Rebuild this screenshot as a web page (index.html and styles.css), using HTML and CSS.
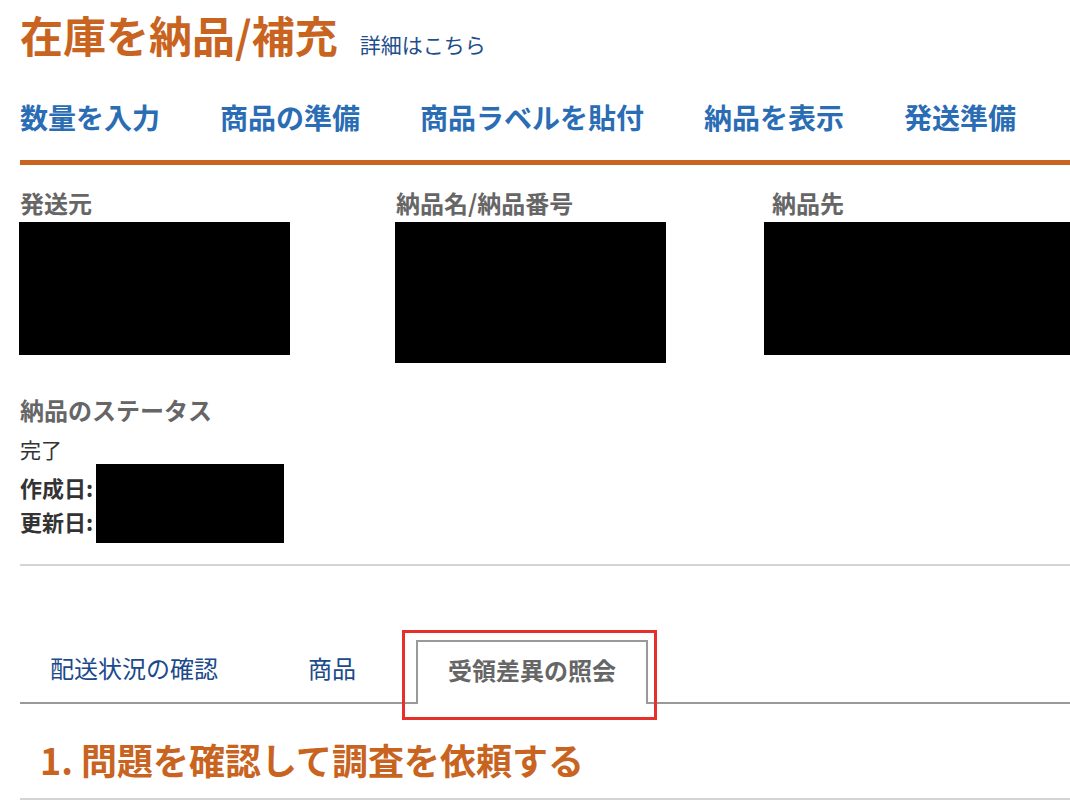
FILE: index.html
```html
<!DOCTYPE html>
<html lang="ja">
<head>
    <meta charset="UTF-8">
    <meta name="viewport" content="width=device-width, initial-scale=1.0">
    <title>在庫を納品/補充</title>
    <link rel="stylesheet" href="styles.css">
</head>
<body>
<div class="page">
    <!-- ヘッダー -->
    <div class="page-header">
        <h1 class="page-title">在庫を納品/補充</h1>
        <a class="help-link" href="#">詳細はこちら</a>
    </div>

    <!-- ステップ -->
    <nav class="steps">
        <a href="#">数量を入力</a>
        <a href="#">商品の準備</a>
        <a href="#">商品ラベルを貼付</a>
        <a href="#">納品を表示</a>
        <a href="#">発送準備</a>
    </nav>

    <!-- 納品情報 -->
    <div class="shipment-info">
        <div class="info-col">
            <h3 class="info-label">発送元</h3>
            <div class="redact redact-from"></div>
        </div>
        <div class="info-col">
            <h3 class="info-label">納品名/納品番号</h3>
            <div class="redact redact-name"></div>
        </div>
        <div class="info-col">
            <h3 class="info-label">納品先</h3>
            <div class="redact redact-to"></div>
        </div>
    </div>

    <div class="status">
        <h3 class="info-label">納品のステータス</h3>
        <p class="status-value">完了</p>
        <div class="dates">
            <div class="date-labels">
                <div>作成日:</div>
                <div>更新日:</div>
            </div>
            <div class="redact redact-dates"></div>
        </div>
    </div>

    <!-- タブ -->
    <div class="tabs-wrap">
        <ul class="tabs">
            <li><a href="#">配送状況の確認</a></li>
            <li><a href="#">商品</a></li>
            <li class="active"><span>受領差異の照会</span></li>
        </ul>
        <div class="callout"></div>
    </div>

    <h2 class="section-title">1. 問題を確認して調査を依頼する</h2>
</div>
</body>
</html>
```

FILE: styles.css
```css
body {
    font-family: "Noto Sans CJK JP", "Noto Sans", sans-serif;
    background-color: #fff;
    color: #333;
    margin: 0;
    overflow: hidden;
}

a {
    text-decoration: none;
}

.page {
    padding: 8px 0 0 20px;
}

.page-header {
    display: flex;
    align-items: baseline;
}

.page-title {
    margin: 0;
    font-size: 43px;
    line-height: 52px;
    font-weight: bold;
    color: #c8641f;
}

.help-link {
    margin-left: 22px;
    font-size: 21px;
    color: #1f4e8c;
}

.steps {
    display: flex;
    gap: 60px;
    margin-top: 37px;
    padding-bottom: 23px;
    border-bottom: 5px solid #c8641f;
}

.steps a {
    font-size: 28px;
    line-height: 40px;
    font-weight: bold;
    color: #2a6db5;
}

.shipment-info {
    display: grid;
    grid-template-columns: 376px 376px 1fr;
    margin-top: 23px;
}

.info-label {
    margin: 0;
    font-size: 24px;
    line-height: 30px;
    font-weight: bold;
    color: #666;
}

.redact {
    background-color: #000;
}

.redact-from {
    width: 271px;
    height: 133px;
    margin: 4px 0 0 -1px;
}

.redact-name {
    width: 271px;
    height: 141px;
    margin: 4px 0 0 -1px;
}

.redact-to {
    width: calc(100% + 8px);
    height: 133px;
    margin: 4px 0 0 -8px;
}

.status {
    margin-top: 32px;
    padding-bottom: 21px;
    border-bottom: 2px solid #d4d4d4;
}

.status-value {
    margin: 9px 0 0;
    font-size: 21px;
    line-height: 30px;
}

.dates {
    display: flex;
    margin-top: 6px;
}

.date-labels {
    font-size: 22px;
    line-height: 34px;
    font-weight: bold;
}

.redact-dates {
    width: 188px;
    height: 79px;
    margin: -6px 0 0 3px;
}

.tabs-wrap {
    position: relative;
    margin-top: 74px;
}

.tabs {
    display: flex;
    gap: 30px;
    margin: 0;
    padding: 0;
    list-style: none;
    border-bottom: 2px solid #999;
}

.tabs li {
    padding: 13px 30px 19px;
    font-size: 24px;
    line-height: 30px;
}

.tabs li a {
    color: #1b4a8c;
}

.tabs li.active {
    margin-bottom: -2px;
    padding: 13px 30px 19px;
    background-color: #fff;
    border: 2px solid #999;
    border-bottom: none;
    font-weight: bold;
    color: #666;
}

.callout {
    position: absolute;
    left: 382px;
    top: -10px;
    width: 249px;
    height: 84px;
    border: 3px solid #e8302a;
}

.section-title {
    margin: 33px 0 0;
    padding: 0 0 17px 20px;
    font-size: 36px;
    line-height: 44px;
    font-weight: bold;
    color: #c8641f;
    border-bottom: 2px solid #d4d4d4;
}
```
